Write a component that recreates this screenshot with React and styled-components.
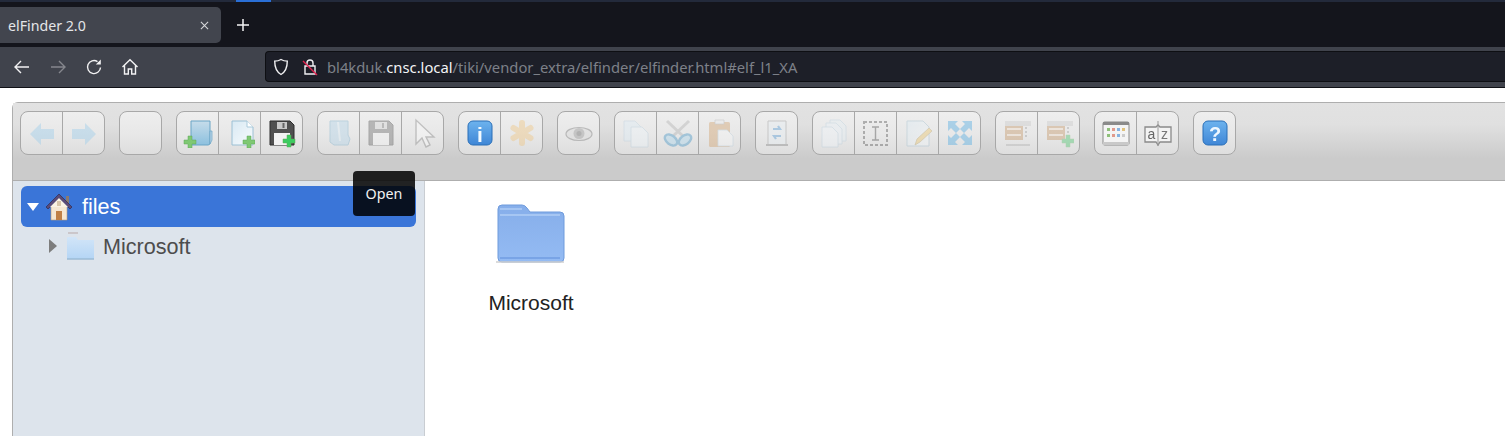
import React from "react";
import styled, { createGlobalStyle } from "styled-components";

const Global = createGlobalStyle`
  html, body { margin: 0; padding: 0; height: 436px; overflow: hidden; background: #fff; }
  #root { height: 436px; }
`;

const Page = styled.div`
  display: flex; flex-direction: column; height: 436px; overflow: hidden;
  background: #fff; font-family: "Liberation Sans", Arial, sans-serif;
`;
const GradientDefs = styled.svg`display: block; width: 0; height: 0; flex: none;`;

const TopStrip = styled.div`
  height: 2px; flex: none; background: #232a3b; padding-left: 236px;
  &::before { content: ""; display: block; width: 35px; height: 2px; background: #2a6fd6; }
`;
const TabBar = styled.div`
  height: 45px; flex: none; background: #14151c; display: flex; align-items: flex-start; padding-top: 5px; box-sizing: border-box;
`;
const Tab = styled.div`
  width: 221px; height: 36px; box-sizing: border-box; padding: 0 12px 0 8px; background: #42454e;
  border-radius: 0 5px 5px 0; display: flex; align-items: center; justify-content: space-between;
  color: #e4e5e8; font: 14.2px "Noto Sans", sans-serif;
`;
const NewTab = styled.div`width: 44px; height: 36px; display: flex; align-items: center; justify-content: center;`;
const NavBar = styled.div`
  height: 41px; flex: none; box-sizing: border-box; background: #40434c; border-bottom: 1px solid #101116;
  display: flex; align-items: center; padding-left: 13px; padding-bottom: 1px;
`;
const NavButton = styled.div`width: ${p => p.$w || 36}px; height: 20px; display: flex; align-items: center; flex: none;`;
const UrlBox = styled.div`
  margin-left: 111px; flex: 1; height: 31px; box-sizing: border-box; background: #1d1f28; border: 1px solid #0e0f13;
  border-right: 0; border-radius: 4px 0 0 4px; display: flex; align-items: center; padding-left: 7px;
  font: 14.78px "Noto Sans", sans-serif; color: #7d8189; white-space: nowrap;
`;
const UrlIcon = styled.span`display: flex; align-items: center; width: ${p => p.$w}px; flex: none;`;
const UrlHost = styled.span`color: #f4f4f6;`;

const Viewport = styled.div`flex: 1; min-height: 0; padding: 14px 0 0 12px; display: flex; overflow: hidden;`;
const Frame = styled.div`
  flex: 1; position: relative; display: flex; flex-direction: column; box-sizing: border-box; height: 340px;
  border: 1px solid #aeaeae; border-right: 0; border-bottom: 0; border-radius: 6px 0 0 0; background: #fff; font-size: 21.6px;
`;
const Toolbar = styled.div`
  height: 78px; flex: none; box-sizing: border-box; display: flex; align-items: flex-start; padding: 8px 0 0 7px; gap: 14px;
  background: linear-gradient(#e2e2e2 0%, #e0e0e0 28%, #cbcbcb 72%, #cbcbcb 100%); border-bottom: 1px solid #aeaeae;
`;
const ButtonGroup = styled.div`
  display: flex; height: 44px; box-sizing: border-box; border: 1px solid #a8a8a8; border-radius: 8px; flex: none;
  overflow: hidden; background: linear-gradient(#eeeeee 0%, #e8e8e8 50%, #dedede 100%);
`;
const ToolButton = styled.div`
  width: 41px; flex: none; display: flex; align-items: center; justify-content: center;
  & + & { border-left: 1px solid #a8a8a8; }
`;
const IconSvg = styled.svg`
  display: block; width: 30px; height: 30px; flex: none; opacity: ${p => p.$dim ? 0.36 : 1}; filter: blur(0.7px);
`;
const IconText = styled.text`
  font-family: "Liberation Sans", Arial, sans-serif; font-weight: ${p => p.$bold ? 700 : 400}; text-anchor: middle;
`;
const Body = styled.div`flex: 1; display: flex; min-height: 0;`;
const Tree = styled.div`
  width: 412px; flex: none; box-sizing: border-box; background: #dde4ec; border-right: 1px solid #c9cdd2; padding: 5px 8px;
`;
const SelectedRow = styled.div`
  height: 41px; background: #3a75d8; border-radius: 6px; color: #fff; display: flex; align-items: center; padding-left: 6px; box-sizing: border-box;
`;
const ChildRow = styled.div`
  height: 38px; display: flex; align-items: center; padding-left: 28px; color: #4d4d4d; box-sizing: border-box;
`;
const Caret = styled.span`
  width: 0; height: 0; flex: none; display: block;
  ${p => p.$open
    ? "border-left: 6.5px solid transparent; border-right: 6.5px solid transparent; border-top: 8px solid #fff; margin-right: 6px;"
    : "border-top: 7px solid transparent; border-bottom: 7px solid transparent; border-left: 8px solid #7d7d7d; margin-right: 10px;"}
`;
const TreeLabel = styled.span`margin-left: ${p => p.$m}px; line-height: 1; padding-top: ${p => p.$t}px;`;
const TreeIcon = styled.svg`display: block; flex: none; filter: blur(0.3px);`;
const Files = styled.div`flex: 1; background: #fff; padding: 21px 0 0 43px;`;
const FileTile = styled.div`
  width: 124px; display: flex; flex-direction: column; align-items: center; font-size: 21px; color: #222;
`;
const FolderSvg = styled.svg`display: block; width: 72px; height: 62px; filter: blur(0.4px);`;
const FileName = styled.div`margin-top: 27px; line-height: 24px; padding-left: 2px;`;
const Tooltip = styled.div`
  position: absolute; left: 340px; top: 68px; width: 62px; height: 45px; box-sizing: border-box; padding-top: 13px; text-align: center;
  background: rgba(0,0,0,.85); border-radius: 4px; color: #f2f2f2; font: 14.3px/20px "Noto Sans", sans-serif;
`;

const Icon = ({ dim, children }) => <IconSvg viewBox="0 0 30 30" $dim={dim}>{children}</IconSvg>;
const Plus = ({ x = 7, y = 24, c = "#7fc873" }) => (
  <path d={`M${x - 2} ${y - 6}h4v4h4v4h-4v4h-4v-4h-4v-4h4z`} fill={c} stroke="#5fa858" strokeWidth=".5" />
);
const Sheet = ({ x, y, w, h, fill = "url(#gPage)" }) => (
  <path d={`M${x} ${y}h${w - 6}l6 6v${h - 6}h-${w}z`} fill={fill} stroke="#a9c6d9" strokeWidth=".8" />
);
const Drawer = () => (
  <>
    <path d="M3 3h26v5H3z" fill="#c4c4c4" />
    <rect x="3" y="8" width="18" height="14" fill="#bf8b55" />
    <path d="M5 11h14M5 17h14" stroke="#f1dcc4" strokeWidth="2" />
    <path d="M24 9v12" stroke="#999" strokeWidth="2" strokeDasharray="2 2" />
  </>
);

const icons = {
  back: <Icon dim><path d="M3 16 14 5v6h13v10H14v6z" fill="#8dc8ea" /></Icon>,
  forward: <Icon dim><path d="M27 16 16 5v6H3v10h13v6z" fill="#8dc8ea" /></Icon>,
  blank: null,
  mkdir: <Icon><path d="M8 3h19v22q0 2-2 2H8z" fill="url(#gFolder)" stroke="#6aa5c6" /><path d="M27 13h2v9l-2 4z" fill="#b9d5e6" stroke="#6aa5c6" strokeWidth=".7" /><Plus x={7} y={24} /></Icon>,
  mkfile: <Icon><path d="M7 3h15l6 6v18H7z" fill="url(#gPage)" stroke="#9cc0d4" /><path d="M22 3v6h6" fill="#fff" stroke="#aacadb" /><Plus x={24} y={24} /></Icon>,
  upload: <Icon><path d="M3 3h20l4 4v20H3z" fill="#505050" stroke="#2c2c2c" /><path d="M10 4h10v7H10z" fill="#c9c9c9" /><path d="M15.5 5h2v5h-2z" fill="#666" /><path d="M7 15h16v12H7z" fill="#f2f2f2" /><Plus x={22} y={23} c="#3ccb60" /></Icon>,
  open: <Icon dim><path d="M6 3h18v14l2 4-2 6H10l-4-3z" fill="#a9d0e8" stroke="#6ea8c8" /><path d="M14 4l2 19" stroke="#d8ecf7" strokeWidth="2" /></Icon>,
  save: <Icon dim><path d="M3 3h20l4 4v20H3z" fill="#5a5a5a" stroke="#333" /><path d="M9 4h12v7H9z" fill="#d0d0d0" /><path d="M16 5h2v5h-2z" fill="#666" /><path d="M7 15h16v12H7z" fill="#f5f5f5" /></Icon>,
  select: <Icon dim><path d="M8 2v24l6-6 4 9 4-2-4-8h8z" fill="#fff" stroke="#777" strokeWidth="1.4" /></Icon>,
  info: <Icon><rect x="3" y="3" width="24" height="24" rx="5" fill="url(#gBlue)" stroke="#2a6fb7" /><IconText x="15" y="24" fontSize="21" fill="#f5fbff" $bold>i</IconText></Icon>,
  star: <Icon dim><g stroke="#f0c070" strokeWidth="6" strokeLinecap="round"><path d="M15 5v20M6.500 10l17 10M23.500 10l-17 10" /></g></Icon>,
  eye: <Icon dim><ellipse cx="15" cy="16" rx="13" ry="6.500" fill="#d6d6d6" stroke="#666" strokeWidth="1.200" /><circle cx="15" cy="15.500" r="5.500" fill="#888" /><circle cx="15" cy="15.500" r="2.500" fill="#555" /></Icon>,
  copy: <Icon dim><Sheet x={3} y={3} w={17} h={20} fill="#dcebf5" /><Sheet x={10} y={9} w={17} h={20} fill="#eef6fb" /></Icon>,
  cut: <Icon dim><path d="M4 3 21 19M26 3 9 19" stroke="#aaa" strokeWidth="3" /><ellipse cx="8" cy="22" rx="7" ry="4.500" fill="#9fd0ea" stroke="#2a87c0" strokeWidth="2.400" transform="rotate(38 8 22)" /><ellipse cx="22" cy="22" rx="7" ry="4.500" fill="#9fd0ea" stroke="#2a87c0" strokeWidth="2.400" transform="rotate(-38 22 22)" /></Icon>,
  paste: <Icon dim><rect x="4" y="4" width="21" height="25" rx="1.500" fill="#cd955a" /><path d="M10 2h9v4h-9z" fill="#e8e8e8" stroke="#999" strokeWidth=".7" /><Sheet x={13} y={12} w={15} h={16} fill="#fafafa" /></Icon>,
  duplicate: <Icon dim><path d="M6 3h18v24H6z" fill="#e6eef3" stroke="#8b8b8b" /><path d="M11 11h7l-2-3M19 18h-7l2 3" fill="none" stroke="#3f8ed0" strokeWidth="2.200" /><path d="M4 27h22" stroke="#777" strokeWidth="2" /></Icon>,
  stack: <Icon dim><Sheet x={11} y={2} w={16} h={21} fill="#e3edf4" /><Sheet x={7} y={5} w={16} h={21} fill="#e9f2f8" /><Sheet x={3} y={9} w={16} h={20} fill="#f0f7fb" /></Icon>,
  rename: <Icon dim><rect x="3" y="4" width="23" height="23" fill="none" stroke="#444" strokeWidth="2" strokeDasharray="3 2" /><path d="M11 9h7M14.500 9v13M11 22h7" stroke="#333" strokeWidth="1.400" /></Icon>,
  edit: <Icon dim><path d="M4 3h16l6 6v19H4z" fill="url(#gPage)" stroke="#9ab9cb" /><path d="M12 27l2-6 12-11 3 3-12 11z" fill="#eec25a" stroke="#a88d47" strokeWidth=".7" /></Icon>,
  resize: <Icon dim><g fill="#39a0e0"><path d="M3 3h10l-3 3 5 5-4 4-5-5-3 3z" /><path d="M27 3v10l-3-3-5 5-4-4 5-5-3-3z" /><path d="M3 27V17l3 3 5-5 4 4-5 5 3 3z" /><path d="M27 27H17l3-3-5-5 4-4 5 5 3-3z" /></g></Icon>,
  extract: <Icon dim><Drawer /><path d="M4 27h24" stroke="#aaa" strokeWidth="2" /></Icon>,
  archive: <Icon dim><Drawer /><Plus x={24} y={23} c="#2fc05a" /></Icon>,
  view: <Icon><rect x="2" y="4" width="26" height="23" rx="1.500" fill="#f4f4f4" stroke="#8a8a8a" /><path d="M2 4h26v3H2z" fill="#8a8a8a" /><path d="M2 24h26v3H2z" fill="#c9c9c9" /><rect x="6" y="10" width="3" height="3" fill="#8fc07a" /><rect x="11" y="10" width="3" height="3" fill="#e09a8c" /><rect x="16" y="10" width="3" height="3" fill="#86b4e2" /><rect x="21" y="10" width="3" height="3" fill="#e0c27c" /><rect x="6" y="16" width="3" height="3" fill="#8fc07a" /><rect x="11" y="16" width="3" height="3" fill="#e09a8c" /><rect x="16" y="16" width="3" height="3" fill="#86b4e2" /><rect x="21" y="16" width="3" height="3" fill="#ccc" /></Icon>,
  sort: <Icon><path d="M2 9h11l2-2 2 2h11v15H17l-2 3-2-3H2z" fill="#f3f3f3" stroke="#8a8a8a" strokeWidth="1.300" /><path d="M15 3v25" stroke="#999" strokeWidth="1" /><IconText x="8.500" y="21" fontSize="14" fill="#666">a</IconText><IconText x="21.500" y="21" fontSize="14" fill="#777">z</IconText></Icon>,
  help: <Icon><rect x="3" y="3" width="24" height="24" rx="5" fill="url(#gBlue)" stroke="#2a6fb7" /><IconText x="15" y="23" fontSize="20" fill="#eef7ff" $bold>?</IconText></Icon>,
};

const groups = [
  ["back", "forward"], ["blank"], ["mkdir", "mkfile", "upload"], ["open", "save", "select"], ["info", "star"],
  ["eye"], ["copy", "cut", "paste"], ["duplicate"], ["stack", "rename", "edit", "resize"], ["extract", "archive"], ["view", "sort"], ["help"],
];

export default function App() {
  return (
    <Page>
      <Global />
      <GradientDefs aria-hidden="true">
        <defs>
          <linearGradient id="gFolder" x1="0" y1="0" x2="0" y2="1"><stop offset="0" stopColor="#c6dcea" /><stop offset="1" stopColor="#8cc0de" /></linearGradient>
          <linearGradient id="gPage" x1="0" y1="0" x2="1" y2="1"><stop offset="0" stopColor="#d8e9f3" /><stop offset="1" stopColor="#f8fbfd" /></linearGradient>
          <linearGradient id="gBlue" x1="0" y1="0" x2="0" y2="1"><stop offset="0" stopColor="#6db3ee" /><stop offset="1" stopColor="#3f86d6" /></linearGradient>
          <linearGradient id="gBig" x1="0" y1="0" x2="0" y2="1"><stop offset="0" stopColor="#86aeea" /><stop offset="1" stopColor="#94bbf3" /></linearGradient>
          <linearGradient id="gLight" x1="0" y1="0" x2="0" y2="1"><stop offset="0" stopColor="#d2e5f8" /><stop offset="1" stopColor="#b4d5f5" /></linearGradient>
        </defs>
      </GradientDefs>
      <TopStrip />
      <TabBar>
        <Tab>
          elFinder 2.0
          <svg width="9" height="9" viewBox="0 0 10 10"><path d="M1 1l8 8M9 1L1 9" stroke="#d6d7da" strokeWidth="1.2" /></svg>
        </Tab>
        <NewTab>
          <svg width="14" height="14" viewBox="0 0 14 14"><path d="M7 1v12M1 7h12" stroke="#f4f4f5" strokeWidth="1.5" /></svg>
        </NewTab>
      </TabBar>
      <NavBar>
        <NavButton>
          <svg width="18" height="16" viewBox="0 0 18 16" fill="none" stroke="#f2f2f3" strokeWidth="1.4"><path d="M16 8H2M8 2 2 8l6 6" /></svg>
        </NavButton>
        <NavButton>
          <svg width="18" height="16" viewBox="0 0 18 16" fill="none" stroke="#85878d" strokeWidth="1.4"><path d="M2 8h14M10 2l6 6-6 6" /></svg>
        </NavButton>
        <NavButton>
          <svg width="18" height="18" viewBox="0 0 18 18" fill="none" stroke="#f2f2f3" strokeWidth="1.4"><path d="M15.5 9.5A6.5 6.5 0 1 1 12.5 3.6" /><path d="M15.8 1.5v5h-5z" fill="#f2f2f3" stroke="none" /></svg>
        </NavButton>
        <NavButton $w={33}>
          <svg width="18" height="18" viewBox="0 0 18 18" fill="none" stroke="#f2f2f3" strokeWidth="1.4"><path d="M1.500 9 9 1.800 16.500 9M3.500 7.500V16h3.800v-5h3.400v5h3.800V7.500" /></svg>
        </NavButton>
        <UrlBox>
          <UrlIcon $w={29}>
            <svg width="16" height="18" viewBox="0 0 16 18" fill="none" stroke="#f0f0f2" strokeWidth="1.4"><path d="M8 1.500c2 1.200 4 1.600 6.300 1.600 0 6-1 10.500-6.300 13.400C2.700 13.600 1.700 9.100 1.700 3.100 4 3.100 6 2.700 8 1.500z" /></svg>
          </UrlIcon>
          <UrlIcon $w={25}>
            <svg width="16" height="18" viewBox="0 0 16 18" fill="none"><path d="M5 8V5a3 3 0 0 1 6 0v3M3 8h10v8H3z" stroke="#f0f0f2" strokeWidth="1.4" /><path d="M1 3l14 14" stroke="#e0234f" strokeWidth="1.4" /></svg>
          </UrlIcon>
          bl4kduk.<UrlHost>cnsc.local</UrlHost>/tiki/vendor_extra/elfinder/elfinder.html#elf_l1_XA
        </UrlBox>
      </NavBar>
      <Viewport>
        <Frame>
          <Toolbar>
            {groups.map((g) => (
              <ButtonGroup key={g[0]}>
                {g.map((n) => <ToolButton key={n}>{icons[n]}</ToolButton>)}
              </ButtonGroup>
            ))}
          </Toolbar>
          <Body>
            <Tree>
              <SelectedRow>
                <Caret $open />
                <TreeIcon width="28" height="28" viewBox="0 0 28 28">
                  <path d="M21 3h3v9h-3z" fill="#8a7a70" />
                  <path d="M6 13h16v14H6z" fill="#f6e7d2" stroke="#b89a7a" strokeWidth=".6" />
                  <path d="M14 1 1 14l2 2L14 5l11 11 2-2z" fill="#5b4a78" stroke="#2c2340" strokeWidth=".6" />
                  <path d="M14 5 5 14h18z" fill="#fbf2e4" />
                  <path d="M11 18h6v9h-6z" fill="#c08046" />
                  <path d="M12 8h4v5h-4z" fill="#d9c6aa" />
                </TreeIcon>
                <TreeLabel $m={9} $t={0}>files</TreeLabel>
              </SelectedRow>
              <ChildRow>
                <Caret />
                <TreeIcon width="27" height="28" viewBox="0 0 27 28"><path d="M0 6q0-1 1-1h8l2 3h16v19H0z" fill="url(#gLight)" /><path d="M1 1h10" stroke="#b9a9a9" strokeWidth="1" /><path d="M0 27h27" stroke="#9bbbd6" strokeWidth="1.500" /></TreeIcon>
                <TreeLabel $m={9} $t={2}>Microsoft</TreeLabel>
              </ChildRow>
            </Tree>
            <Files>
              <FileTile>
                <FolderSvg viewBox="0 0 72 62">
                  <path d="M4 7q0-4 4-4h20q3 0 5 3l3 4h30q4 0 4 4v42q0 4-4 4H8q-4 0-4-4z" fill="url(#gBig)" stroke="#6f9bdc" strokeWidth="1" />
                  <path d="M6 7h22M6 13h60" stroke="#b0cdf5" strokeWidth="1.500" />
                  <path d="M6 56h60" stroke="#719de2" strokeWidth="1.500" />
                  <path d="M2 60h68" stroke="#cfcfcf" strokeWidth="1.500" />
                </FolderSvg>
                <FileName>Microsoft</FileName>
              </FileTile>
            </Files>
          </Body>
          <Tooltip>Open</Tooltip>
        </Frame>
      </Viewport>
    </Page>
  );
}
